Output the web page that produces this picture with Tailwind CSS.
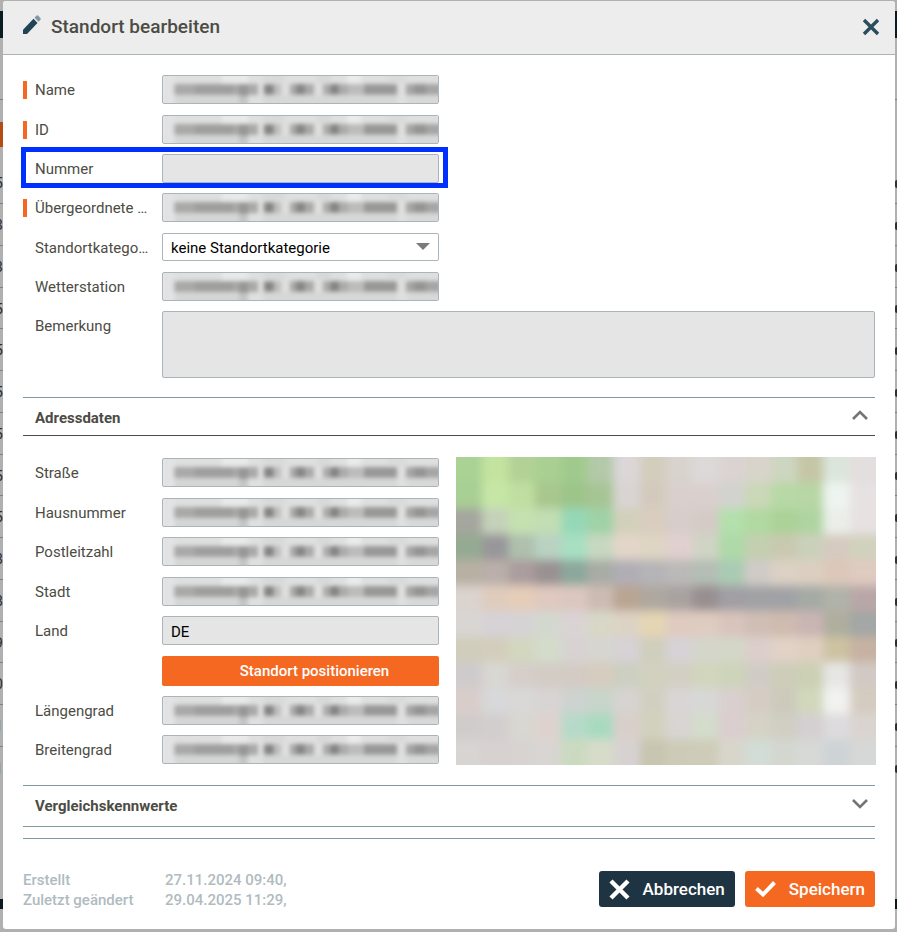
<!DOCTYPE html>
<html lang="de">

<head>
    <meta charset="UTF-8">
    <meta name="viewport" content="width=device-width, initial-scale=1.0">
    <title>Standort bearbeiten</title>
    <script src="https://cdn.jsdelivr.net/npm/@tailwindcss/browser@4"></script>
</head>

<body class="relative min-h-screen overflow-x-hidden bg-[#b0b0b0] pt-px pr-[2px] pb-[3px] pl-[3px] font-['Roboto',sans-serif] text-[15px] text-[#4c4c44]">

    <!-- dimmed page behind the dialog -->
    <div class="absolute inset-0 flex flex-col overflow-hidden pt-[11px]" aria-hidden="true">
        <div class="h-[27px] shrink-0 bg-[#0c1a22]"></div>
        <div class="h-[62px] shrink-0 border-b border-[#7b8488]"></div>
        <div class="mt-[22px] h-[25px] w-[4px] shrink-0 bg-[#b54b17]"></div>
        <div id="page-rows" class="mt-[15px]"></div>
        <div class="mt-auto mb-[23px] h-[10px] shrink-0 bg-[#0c1a22]"></div>
    </div>

    <!-- hidden symbol for the masked values -->
    <svg class="absolute h-0 w-0" aria-hidden="true">
        <defs>
            <filter id="soft" x="-5%" y="-30%" width="110%" height="160%">
                <feGaussianBlur stdDeviation="2" />
            </filter>
            <symbol id="masked" viewBox="0 1 273 27">
                <rect width="273" height="29" fill="#dfdfdf" />
                <g filter="url(#soft)">
                    <rect x="0" y="-4" width="10" height="37" fill="#e3e3e3" />
                    <rect x="57" y="-4" width="26" height="12" fill="#e9e9e9" />
                    <rect x="98" y="-4" width="22" height="12" fill="#d9d9d9" />
                    <rect x="152" y="-4" width="14" height="12" fill="#d8d8d8" />
                    <rect x="182" y="-4" width="14" height="12" fill="#ebebeb" />
                    <rect x="222" y="-4" width="20" height="12" fill="#dadada" />
                    <rect x="10" y="20" width="64" height="12" fill="#d5d5d5" />
                    <rect x="74" y="20" width="9" height="12" fill="#c4c4c4" />
                    <rect x="98" y="20" width="134" height="12" fill="#d7d7d7" />
                    <rect x="242" y="20" width="36" height="12" fill="#d8d8d8" />
                    <rect x="9" y="9" width="84" height="11" fill="#a9a9a9" />
                    <rect x="30" y="9" width="38" height="11" fill="#9f9f9f" />
                    <rect x="74" y="9" width="9" height="12" fill="#969696" />
                    <rect x="99" y="9" width="10" height="11" fill="#858585" />
                    <rect x="109" y="9" width="7" height="11" fill="#bdbdbd" />
                    <rect x="125" y="9" width="24" height="11" fill="#a9a9a9" />
                    <rect x="131" y="9" width="9" height="11" fill="#868686" />
                    <rect x="158" y="9" width="25" height="11" fill="#ababab" />
                    <rect x="165" y="9" width="9" height="11" fill="#858585" />
                    <rect x="183" y="9" width="16" height="11" fill="#bcbcbc" />
                    <rect x="199" y="9" width="33" height="11" fill="#989898" />
                    <rect x="241" y="9" width="35" height="11" fill="#a5a5a5" />
                    <rect x="249" y="9" width="12" height="11" fill="#949494" />
                </g>
            </symbol>
        </defs>
    </svg>

    <form role="dialog" aria-labelledby="dialog-title" class="relative flex min-h-[calc(100vh-4px)] flex-col overflow-hidden rounded-[3px] bg-white">

        <header class="flex h-[54px] shrink-0 items-center border-b border-[#a9b5bb] bg-[#ededed] pr-[15px] pb-[2px] pl-5">
            <svg class="-mt-1 mr-[10px] h-[19px] w-[18px]" viewBox="0 0 18 18" preserveAspectRatio="none" aria-hidden="true">
                <path d="M0 18V14L10.500 3.500L14.500 7.500L4 18Z" fill="#204556" />
                <path d="M11.500 2.500L13.200 .8Q14.300 -.2 15.400 .8L17.200 2.600Q18.200 3.700 17.200 4.800L15.500 6.500Z" fill="#8299a5" />
            </svg>
            <h1 id="dialog-title" class="text-[19px] leading-6 font-medium">Standort bearbeiten</h1>
            <button type="button" aria-label="Schließen" class="ml-auto">
                <svg class="h-[18px] w-[18px]" viewBox="0 0 18 18" fill="none" stroke="#2a4c5d" stroke-width="3.400" aria-hidden="true">
                    <path d="M2 2L16 16M16 2L2 16" />
                </svg>
            </button>
        </header>

        <main class="px-5 pt-5">
            <div class="flex flex-col gap-[10px]">
                <div class="flex h-[30px] items-start">
                    <label for="name" class="mt-[6px] mr-3 w-[127px] truncate border-l-4 border-[#f56821] pl-2 leading-[18px]">Name</label>
                    <div class="relative h-[29px] w-[277px]">
                        <input id="name" readonly class="h-full w-full rounded-[2px] border border-[#a9b5bb] bg-[#e5e5e5]">
                        <svg class="pointer-events-none absolute inset-y-px right-px left-[3px] h-[27px] w-[273px]"><use href="#masked" /></svg>
                    </div>
                </div>
                <div class="flex h-[29px] items-start">
                    <label for="id" class="mt-[6px] mr-3 w-[127px] truncate border-l-4 border-[#f56821] pl-2 leading-[18px]">ID</label>
                    <div class="relative h-[29px] w-[277px]">
                        <input id="id" readonly class="h-full w-full rounded-[2px] border border-[#a9b5bb] bg-[#e5e5e5]">
                        <svg class="pointer-events-none absolute inset-y-px right-px left-[3px] h-[27px] w-[273px]"><use href="#masked" /></svg>
                    </div>
                </div>
                <div class="relative flex h-[29px] w-[416px] items-start">
                    <label for="nummer" class="mt-[6px] mr-3 w-[127px] truncate border-l-4 border-transparent pl-2 leading-[18px]">Nummer</label>
                    <input id="nummer" readonly class="h-[29px] w-[277px] rounded-[2px] border border-[#a9b5bb] bg-[#e5e5e5]">
                    <div class="pointer-events-none absolute -top-[7px] -right-[9px] -bottom-[5px] -left-[2px] border-[5px] border-[#0030ff]"></div>
                </div>
                <div class="flex h-[30px] items-start">
                    <label for="parent" class="mt-[6px] mr-3 w-[127px] truncate border-l-4 border-[#f56821] pl-2 leading-[18px]">Übergeordnete Standorte</label>
                    <div class="relative h-[29px] w-[277px]">
                        <input id="parent" readonly class="h-full w-full rounded-[2px] border border-[#a9b5bb] bg-[#e5e5e5]">
                        <svg class="pointer-events-none absolute inset-y-px right-px left-[3px] h-[27px] w-[273px]"><use href="#masked" /></svg>
                    </div>
                </div>
                <div class="flex h-[29px] items-start">
                    <label for="kategorie" class="mt-[6px] mr-3 w-[127px] truncate border-l-4 border-transparent pl-2 leading-[18px]">Standortkategorie</label>
                    <div class="relative w-[277px]">
                        <select id="kategorie" class="h-[28px] w-full appearance-none rounded-[2px] border border-[#a9b5bb] bg-white px-2 pt-[2px] text-black">
                            <option>keine Standortkategorie</option>
                        </select>
                        <svg class="pointer-events-none absolute top-[10px] right-[9px] h-[7px] w-[14px]" viewBox="0 0 14 7" aria-hidden="true"><path d="M0 0H14L7 7Z" fill="#7a7a7a" /></svg>
                    </div>
                </div>
                <div class="flex h-[29px] items-start">
                    <label for="wetter" class="mt-[6px] mr-3 w-[127px] truncate border-l-4 border-transparent pl-2 leading-[18px]">Wetterstation</label>
                    <div class="relative h-[29px] w-[277px]">
                        <input id="wetter" readonly class="h-full w-full rounded-[2px] border border-[#a9b5bb] bg-[#e5e5e5]">
                        <svg class="pointer-events-none absolute inset-y-px right-px left-[3px] h-[27px] w-[273px]"><use href="#masked" /></svg>
                    </div>
                </div>
                <div class="flex items-start">
                    <label for="bemerkung" class="mt-[6px] mr-3 w-[127px] shrink-0 truncate border-l-4 border-transparent pl-2 leading-[18px]">Bemerkung</label>
                    <textarea id="bemerkung" readonly class="block h-[67px] flex-1 resize-none rounded-[2px] border border-[#a9b5bb] bg-[#e5e5e5]"></textarea>
                </div>
            </div>

            <h2 class="mt-[19px] border-t border-b border-t-[#8198a4] border-b-[#4c4c44] text-[15px] font-bold">
                <button type="button" aria-expanded="true" class="flex h-[37px] w-full items-center pt-1 pr-[7px] pl-3">
                    Adressdaten
                    <svg class="-mt-2 ml-auto h-[10px] w-4" viewBox="0 0 16 10" fill="none" stroke="#757575" stroke-width="2.600" aria-hidden="true"><path d="M1 9L8 2L15 9" /></svg>
                </button>
            </h2>

            <div class="flex gap-[17px] pt-[21px]">
                <div class="flex w-[416px] shrink-0 flex-col gap-[10px] pt-px">
                    <div class="flex h-[30px] items-start">
                        <label for="strasse" class="mt-[6px] mr-3 w-[127px] pl-3 leading-[18px]">Straße</label>
                        <div class="relative h-[29px] w-[277px]">
                            <input id="strasse" readonly class="h-full w-full rounded-[2px] border border-[#a9b5bb] bg-[#e5e5e5]">
                            <svg class="pointer-events-none absolute inset-y-px right-px left-[3px] h-[27px] w-[273px]"><use href="#masked" /></svg>
                        </div>
                    </div>
                    <div class="flex h-[29px] items-start">
                        <label for="hausnummer" class="mt-[6px] mr-3 w-[127px] pl-3 leading-[18px]">Hausnummer</label>
                        <div class="relative h-[29px] w-[277px]">
                            <input id="hausnummer" readonly class="h-full w-full rounded-[2px] border border-[#a9b5bb] bg-[#e5e5e5]">
                            <svg class="pointer-events-none absolute inset-y-px right-px left-[3px] h-[27px] w-[273px]"><use href="#masked" /></svg>
                        </div>
                    </div>
                    <div class="flex h-[30px] items-start">
                        <label for="plz" class="mt-[6px] mr-3 w-[127px] pl-3 leading-[18px]">Postleitzahl</label>
                        <div class="relative h-[29px] w-[277px]">
                            <input id="plz" readonly class="h-full w-full rounded-[2px] border border-[#a9b5bb] bg-[#e5e5e5]">
                            <svg class="pointer-events-none absolute inset-y-px right-px left-[3px] h-[27px] w-[273px]"><use href="#masked" /></svg>
                        </div>
                    </div>
                    <div class="flex h-[29px] items-start">
                        <label for="stadt" class="mt-[6px] mr-3 w-[127px] pl-3 leading-[18px]">Stadt</label>
                        <div class="relative h-[29px] w-[277px]">
                            <input id="stadt" readonly class="h-full w-full rounded-[2px] border border-[#a9b5bb] bg-[#e5e5e5]">
                            <svg class="pointer-events-none absolute inset-y-px right-px left-[3px] h-[27px] w-[273px]"><use href="#masked" /></svg>
                        </div>
                    </div>
                    <div class="flex h-[30px] items-start">
                        <label for="land" class="mt-[6px] mr-3 w-[127px] pl-3 leading-[18px]">Land</label>
                        <input id="land" value="DE" readonly class="h-[29px] w-[277px] rounded-[2px] border border-[#a9b5bb] bg-[#e5e5e5] px-2 pt-[2px] text-black">
                    </div>
                    <button type="button" class="ml-[139px] h-[30px] rounded-[2px] bg-[#f56821] pl-7 font-medium text-white">Standort positionieren</button>
                    <div class="flex h-[29px] items-start">
                        <label for="lon" class="mt-[6px] mr-3 w-[127px] pl-3 leading-[18px]">Längengrad</label>
                        <div class="relative h-[29px] w-[277px]">
                            <input id="lon" readonly class="h-full w-full rounded-[2px] border border-[#a9b5bb] bg-[#e5e5e5]">
                            <svg class="pointer-events-none absolute inset-y-px right-px left-[3px] h-[27px] w-[273px]"><use href="#masked" /></svg>
                        </div>
                    </div>
                    <div class="flex h-[29px] items-start">
                        <label for="lat" class="mt-[6px] mr-3 w-[127px] pl-3 leading-[18px]">Breitengrad</label>
                        <div class="relative h-[29px] w-[277px]">
                            <input id="lat" readonly class="h-full w-full rounded-[2px] border border-[#a9b5bb] bg-[#e5e5e5]">
                            <svg class="pointer-events-none absolute inset-y-px right-px left-[3px] h-[27px] w-[273px]"><use href="#masked" /></svg>
                        </div>
                    </div>
                </div>

                <svg id="map" class="-mr-px h-[308px] min-w-0 flex-1" viewBox="0 0 420 308" preserveAspectRatio="none" role="img" aria-label="Karte">
                    <filter id="map-soft"><feGaussianBlur stdDeviation="5" /></filter>
                    <g id="map-cells" filter="url(#map-soft)"></g>
                </svg>
            </div>

            <h2 class="mt-5 border-t border-b border-[#8198a4] text-[15px] font-bold">
                <button type="button" aria-expanded="false" class="flex h-[40px] w-full items-center pr-[7px] pl-3">
                    Vergleichskennwerte
                    <svg class="-mt-1 ml-auto h-[10px] w-4" viewBox="0 0 16 10" fill="none" stroke="#757575" stroke-width="2.600" aria-hidden="true"><path d="M1 1L8 8L15 1" /></svg>
                </button>
            </h2>
            <hr class="mt-[11px] border-[#8198a4]">
        </main>

        <footer class="flex items-start px-5 pt-[31px] pb-[19px]">
            <dl class="grid grid-cols-[142px_auto] leading-5 font-medium text-[#b0bbc0]">
                <dt>Erstellt</dt>
                <dd>27.11.2024 09:40,</dd>
                <dt>Zuletzt geändert</dt>
                <dd>29.04.2025 11:29,</dd>
            </dl>
            <div class="ml-auto flex gap-[10px] pt-px text-[17px] font-medium text-white">
                <button type="button" class="flex h-[36px] items-center gap-[13px] rounded-[3px] bg-[#1f3442] px-[10px]">
                    <svg class="h-[21px] w-[21px]" viewBox="0 0 21 21" fill="none" stroke="currentColor" stroke-width="4.400" aria-hidden="true"><path d="M2 2L19 19M19 2L2 19" /></svg>
                    <span class="pt-[2px]">Abbrechen</span>
                </button>
                <button type="submit" class="flex h-[36px] items-center gap-[13px] rounded-[3px] bg-[#f56821] px-[10px]">
                    <svg class="h-[21px] w-[21px]" viewBox="0 0 21 21" fill="none" stroke="currentColor" stroke-width="4" aria-hidden="true"><path d="M1.500 9.500L8 15.500L19.500 3.500" /></svg>
                    <span class="pt-[2px]">Speichern</span>
                </button>
            </div>
        </footer>
    </form>

    <script>
        // pixelated map preview, one colour per cell
        const cells = [
            "a9d294 c3e49f b3d196 a9d092 a0ca8d b3c9a8 dcd6d8 d3cdbe d8d3cc ddd9d9 dad3d1 d8d4cb cdd6c0 c5c6a5 dce5db e3dfde",
            "a8cf94 c6e6a6 bfdfa0 a8c78e 9dc58a a6c594 d9d4d3 d3cabd d9d0cd d9d0ce d2d3ce cbd8b8 b7d9a6 b7d7a4 eef4f0 e6e1e2",
            "a5a69e c5d1b9 c5e1b0 c2deb2 95d8b7 9fd2a6 d2d0bb d9cdbf d7cdcb d5cac6 b3e0ac b0d9a1 abd298 afd4a0 eaefe9 e7e1e2",
            "95aa92 98969a afc0ad b9d2c2 a8dfc2 c7d8c0 e3d6c9 ded5c3 e0d0cf d0d4c5 aed9a8 c3cfb0 c9c9b0 cbd0bb d5cbc0 d1d2bd",
            "b7b0a3 baafaa ab9c9e 999192 8ca79b a8aca5 b0aeb5 b5b4b6 bbb9b7 b4beb5 aacbb3 d0cbc7 dbd1c4 dccfc1 dcc7ba dfcbc0",
            "dad3ce dfccbd e5cdb9 dfc9c0 dbc7c0 ccbbb3 baa593 afa8a0 a9a3a0 988f90 a29fa5 a1a2a4 a0a2a5 a5aaa4 b0b3a9 b9a7a8",
            "d9d5d3 d7d2d6 d6d3d4 d3d8cf dad3d4 d8d8c6 ddd3c4 e4d6b3 dfcbbf dfccc1 d9c4bc d0beb5 cfbbaf c9b5b4 afae9f a3a7a5",
            "d0cdbb d3cdbc d3d7c0 d3dccb d8d3d2 d6d5d0 d6d2d6 d0cebd d7d2d6 d4d6cb d3d7c8 dccfcb e2d2c6 dfcfc1 cec2a2 c6b2a2",
            "cfcbcc d8d7d2 d5cec9 d3ccc5 d3cbc4 d6ccbf cccfc1 d2d1c0 d3cfc3 d1d6bd cdd4b9 d0ccc5 cecdb9 ccd0b4 e6e6e4 d2c9c4",
            "d9cdca d7d8da d9d8d6 d8d4d4 ced3d0 c7d5ca d7d3d0 d2cfc0 d9d5d5 d7d8d6 d9cfcf d5cdc4 cdcabc d1d8bc f2f2f1 d4ccc0",
            "d0cccb d2cecd d8d7d2 dfd2ce b5dac9 a8dac0 d9cfca d2d1bf d8d5d2 d4dccb dacecf d6d2c6 cfcfc3 d4cfd1 dddbdd dad4d0",
            "d8d4d2 d7d1d0 d8d3d1 d8d5d3 cbdabf d6dcc9 d7d2d2 c8c5b0 cdcbb7 ceccb8 d8d6cb d1ddd6 d4d7d0 d6d9d6 ced3d5 d6d8d7"
        ].map(row => row.split(" "));

        // one extra ring of cells keeps the blur from fading at the edges
        const w = 420 / 16, h = 308 / 12;
        let map = "";
        for (let y = -1; y <= 12; y++) {
            for (let x = -1; x <= 16; x++) {
                const color = cells[Math.min(11, Math.max(0, y))][Math.min(15, Math.max(0, x))];
                map += `<rect x="${x * w}" y="${y * h}" width="${w + 0.5}" height="${h + 0.5}" fill="#${color}"/>`;
            }
        }
        document.getElementById("map-cells").innerHTML = map;

        document.getElementById("page-rows").innerHTML = [..."533555555889011"].map(digit => `
            <div class="flex h-[42px] items-center justify-between border-b border-[#7b8488] pt-[2px] text-[#2f2f2c] nth-[4n]:h-[41px] last:border-0">
                <span class="flex w-[3px] justify-end">${digit}</span>
                <span class="h-2 w-[2px] rounded-l-full bg-[#2f2f2c]"></span>
            </div>`).join("");
    </script>
</body>

</html>
